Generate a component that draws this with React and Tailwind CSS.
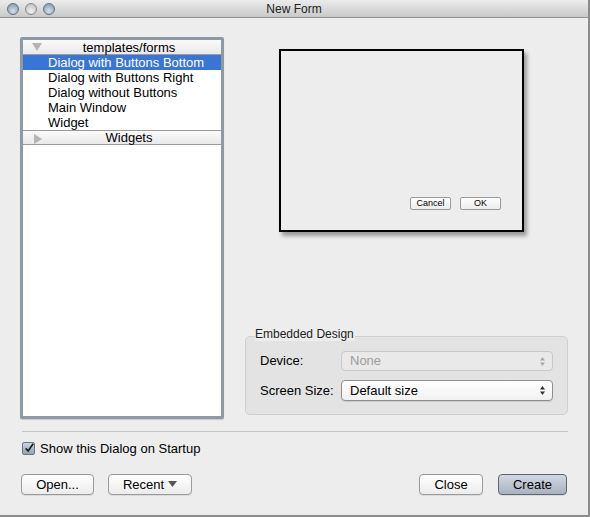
import { useState } from 'react'

const font = { fontFamily: '"Liberation Sans", Arial, sans-serif' }

function Light({ gray }) {
  return (
    <div
      className={`w-[12px] h-[12px] rounded-full border ${gray ? 'border-[#8a8a8a] bg-[radial-gradient(circle_at_50%_70%,#f2f2f2,#b8b8b8)]' : 'border-[#5f7383] bg-[radial-gradient(circle_at_50%_70%,#d4e2ec,#7b91a3)]'}`}
    />
  )
}

function Updown({ dim }) {
  return (
    <svg width="7" height="11" viewBox="0 0 7 11" className="shrink-0">
      <path d="M3.5 1 L6 4.5 L1 4.5 Z" fill={dim ? '#a8a8a8' : '#333'} />
      <path d="M3.5 10 L6 6.5 L1 6.5 Z" fill={dim ? '#a8a8a8' : '#333'} />
    </svg>
  )
}

function MacButton({ children, className = '', primary }) {
  return (
    <button
      className={`h-[21px] rounded-[4px] border text-[13px] leading-none text-black flex items-center justify-center shadow-[0_1px_0_rgba(0,0,0,0.08)] ${primary ? 'border-[#5e6673] bg-[linear-gradient(#d2d8e2,#a9b2c0)]' : 'border-[#9a9a9a] bg-[linear-gradient(#ffffff,#ececec)]'} ${className}`}
    >
      {children}
    </button>
  )
}

const templates = [
  'Dialog with Buttons Bottom',
  'Dialog with Buttons Right',
  'Dialog without Buttons',
  'Main Window',
  'Widget',
]

export default function App() {
  const [selected, setSelected] = useState(0)
  const [showOnStartup, setShowOnStartup] = useState(true)

  return (
    <div style={font} className="w-[590px] h-[517px] bg-[#ededed] flex flex-col border-r-2 border-b-2 border-[#8c8c8c] overflow-hidden">
      {/* title bar */}
      <div className="h-[18px] shrink-0 relative flex items-center border-b border-[#8f8f8f] bg-[linear-gradient(#ececec,#c9c9c9)]">
        <div className="flex gap-[6px] pl-[7px]">
          <Light />
          <Light gray />
          <Light />
        </div>
        <div className="absolute inset-0 flex items-center justify-center text-[12px] text-[#222]">New Form</div>
      </div>

      <div className="flex-1 flex flex-col pl-[20px] pr-[20px] pt-[19px]">
        <div className="flex">
          {/* template tree */}
          <div className="w-[204px] h-[382px] border-[3px] border-[#8f99a3] rounded-[2px] bg-white flex flex-col shadow-[0_1px_1px_rgba(0,0,0,0.15)]">
            <div className="h-[15px] relative flex items-center justify-center pl-[14px] border-b border-[#9c9c9c] bg-[linear-gradient(#fafafa,#e9e9e9)] text-[13px] leading-none">
              <span className="absolute left-[9px] top-[3px] w-0 h-0 border-l-[5px] border-r-[5px] border-t-[8px] border-l-transparent border-r-transparent border-t-[#b4b4b4]" />
              templates/forms
            </div>
            {templates.map((t, i) => (
              <div
                key={t}
                onClick={() => setSelected(i)}
                className={`h-[15px] pl-[25px] flex items-center text-[13px] leading-none ${selected === i ? 'bg-[#3875d7] text-white' : 'text-black'}`}
              >
                {t}
              </div>
            ))}
            <div className="h-[15px] relative flex items-center justify-center pl-[14px] border-y border-[#9c9c9c] bg-[linear-gradient(#fafafa,#e9e9e9)] text-[13px] leading-none">
              <span className="absolute left-[11px] top-[3px] w-0 h-0 border-t-[5px] border-b-[5px] border-l-[8px] border-t-transparent border-b-transparent border-l-[#b4b4b4]" />
              Widgets
            </div>
          </div>

          {/* right column */}
          <div className="ml-[21px] flex-1 flex flex-col">
            <div className="ml-[34px] mt-[12px] w-[245px] h-[183px] border-[2px] border-black bg-[#ededed] shadow-[3px_4px_4px_rgba(0,0,0,0.35)] flex items-end justify-end pr-[21px] pb-[20px] gap-[9px]">
              <div className="w-[41px] h-[13px] rounded-[2px] border border-[#9a9a9a] bg-[linear-gradient(#ffffff,#ececec)] text-[9px] leading-none flex items-center justify-center">Cancel</div>
              <div className="w-[41px] h-[13px] rounded-[2px] border border-[#9a9a9a] bg-[linear-gradient(#ffffff,#ececec)] text-[9px] leading-none flex items-center justify-center">OK</div>
            </div>

            <div className="mt-[96px] relative">
              <div className="text-[12px] leading-none text-[#222] pl-[10px] relative z-10 mb-[-4px]">
                <span className="bg-[#ededed] pr-[1px]">Embedded Design</span>
              </div>
              <div className="h-[79px] rounded-[5px] border border-[#cfcfcf] bg-[#e3e3e3] pl-[14px] pr-[14px] pt-[14px] flex flex-col gap-[9px]">
                <div className="flex items-center">
                  <div className="w-[81px] text-[13px] text-black">Device:</div>
                  <div className="flex-1 h-[20px] rounded-[4px] border border-[#c8c8c8] bg-[#e9e9e9] flex items-center justify-between pl-[8px] pr-[6px] text-[13px] text-[#9c9c9c]">
                    None
                    <Updown dim />
                  </div>
                </div>
                <div className="flex items-center">
                  <div className="w-[81px] text-[13px] text-black">Screen Size:</div>
                  <div className="flex-1 h-[21px] rounded-[4px] border border-[#8e8e8e] bg-[linear-gradient(#ffffff,#f1f1f1)] flex items-center justify-between pl-[8px] pr-[6px] text-[13px] text-black shadow-[0_1px_0_rgba(0,0,0,0.1)]">
                    Default size
                    <Updown />
                  </div>
                </div>
              </div>
            </div>
          </div>
        </div>

        <div className="mt-[12px] ml-[2px] h-px bg-[#c4c4c4]" />

        <label className="mt-[7px] ml-[2px] flex items-center gap-[5px] text-[13px] text-black">
          <span
            onClick={() => setShowOnStartup(v => !v)}
            className="w-[13px] h-[13px] rounded-[2px] border border-[#6c7580] bg-[linear-gradient(#c9d3df,#93a2b3)] flex items-center justify-center"
          >
            {showOnStartup && (
              <svg width="12" height="12" viewBox="0 0 12 12" className="-mt-[2px] ml-[1px]">
                <path d="M2 6.5 L5 9.5 L11 1" fill="none" stroke="#1c1c1c" strokeWidth="2" />
              </svg>
            )}
          </span>
          Show this Dialog on Startup
        </label>

        <div className="mt-[15px] flex items-center">
          <MacButton className="ml-[1px] w-[73px]">Open...</MacButton>
          <MacButton className="ml-[14px] w-[84px] gap-[4px]">
            Recent
            <svg width="9" height="6" viewBox="0 0 9 6"><path d="M0 0 L9 0 L4.5 6 Z" fill="#555" /></svg>
          </MacButton>
          <div className="flex-1" />
          <MacButton className="w-[64px]">Close</MacButton>
          <MacButton primary className="ml-[15px] w-[69px] mr-[1px]">Create</MacButton>
        </div>
      </div>
    </div>
  )
}
